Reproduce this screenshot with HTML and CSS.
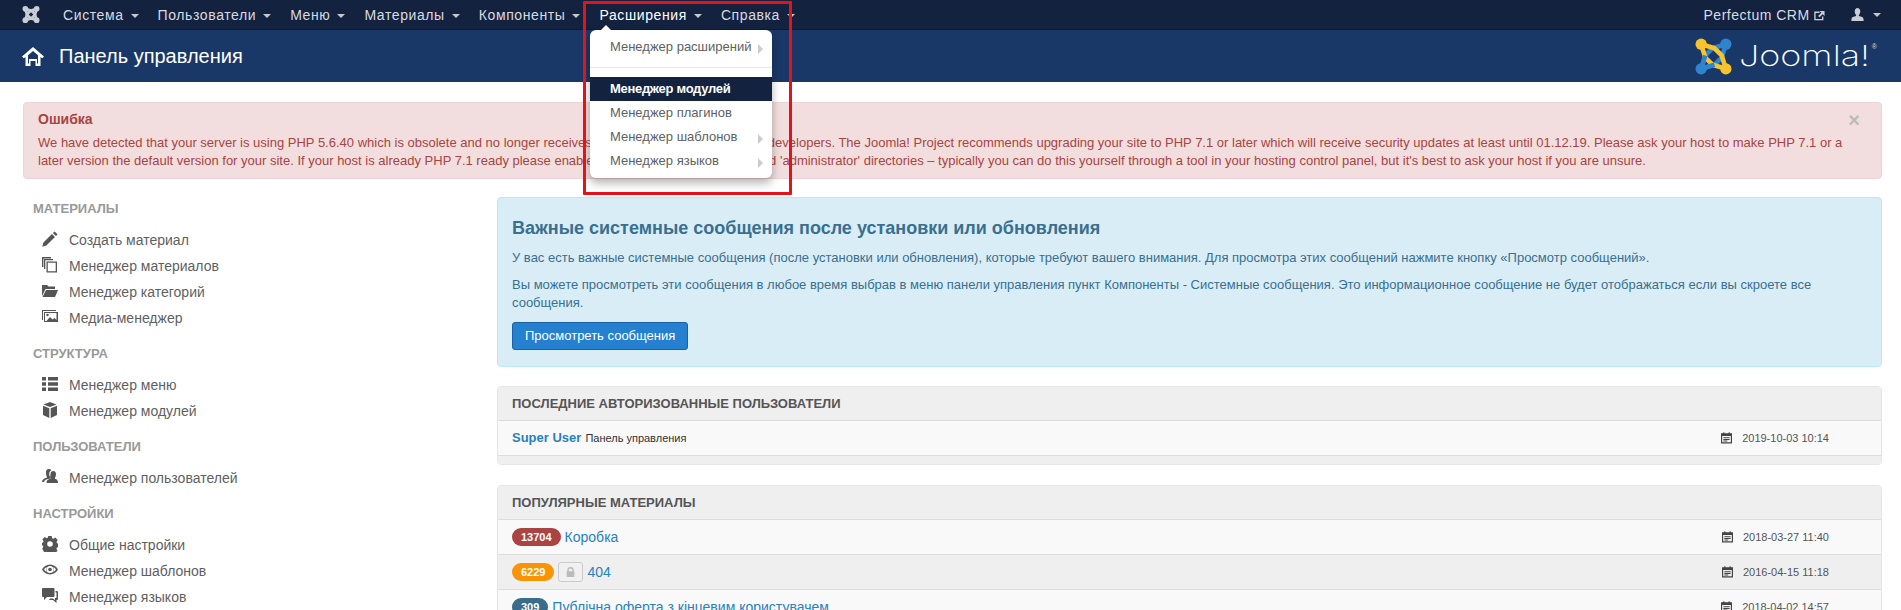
FILE: index.html
```html
<!DOCTYPE html>
<html>
  <head>
    <meta charset="UTF-8" />
    <title>Панель управления</title>
    <link rel="stylesheet" href="styles.css">
  </head>
  <body>
    <svg class="sprite" xmlns="http://www.w3.org/2000/svg">
      <symbol id="i-pencil" viewBox="0 0 16 16"><path d="M12.600 0.400l3 3-1.700 1.700-3-3zM10 3l3 3-8.600 8.600-4.200 1.200 1.200-4.200z"/></symbol>
      <symbol id="i-stack" viewBox="0 0 16 16"><path d="M0 0h9v1.400H1.400V10H0zM2 2h9v1.300H3.300V12H2z"/><path d="M4.500 4.500h10.500v11H4.500zM5.800 5.800v8.400h7.900V5.800z" fill-rule="evenodd"/></symbol>
      <symbol id="i-folder" viewBox="0 0 16 16"><path d="M0 2h5l1.500 1.500H13V6H3.500L0 13zM4 7h12l-3 7H0.500z"/></symbol>
      <symbol id="i-image" viewBox="0 0 16 16"><path d="M0 1h14v1H1v9H0z"/><path fill-rule="evenodd" d="M2 3h14v10H2zM3 4v8h1.500l3.500-4 2.500 2.500 2-1.500 2 2V4z"/><circle cx="5.500" cy="6" r="1.200"/></symbol>
      <symbol id="i-list" viewBox="0 0 16 16"><path d="M0 1h4v3.500H0zM6 1h10v3.500H6zM0 6.300h4v3.500H0zM6 6.300h10v3.500H6zM0 11.500h4V15H0zM6 11.500h10V15H6z"/></symbol>
      <symbol id="i-cube" viewBox="0 0 16 16"><path d="M8 0l6.500 2.500L8 5 1.500 2.500zM1 3.800l6.300 2.400V16L1 13zM15 3.800L8.700 6.200V16l6.300-3z"/></symbol>
      <symbol id="i-users" viewBox="0 0 16 16"><path d="M4 3c0-2 1.200-3 2.800-3 1.100 0 2 .5 2.500 1.300C7.800 2 7.200 3.400 7.200 5c0 1.500.6 2.700 1.300 3.400v1.200C5 10 2.500 11 2 13H0c0-2.500 2-3.800 4.800-4.300V7.500C4.200 6.800 4 5 4 3z"/><path d="M8.500 5c0-2 1.200-3 2.700-3s2.800 1 2.800 3c0 1.500-.4 3-1 3.700v1.100c1.800.4 3 1.500 3 4.200H4.500c0-2.700 1.500-3.800 4-4.200V8.700C7.900 8 8.500 6.500 8.500 5z"/></symbol>
      <symbol id="i-cog" viewBox="0 0 16 16"><path fill-rule="evenodd" d="M6.300 0h3.400l.4 2.200 1.300.6 2-1.200 2.300 2.400-1.200 1.900.6 1.400 1.900.4v3.400l-2 .4-.6 1.300 1.200 1.900-2.400 2.300-1.900-1.200-1.300.5-.5 2.100H6.300l-.5-2.100-1.300-.5-1.900 1.200L.2 12.700l1.200-1.900-.6-1.300-.8-.2V6.900l1-.3.6-1.400-1.200-1.900L2.700 1l2 1.200 1.200-.6zM8 5.200a2.800 2.800 0 1 0 0 5.600 2.800 2.800 0 0 0 0-5.600z"/></symbol>
      <symbol id="i-eye" viewBox="0 0 16 16"><path fill-rule="evenodd" d="M8 2.500c3.600 0 6.500 2.200 8 5-1.500 2.800-4.400 5-8 5s-6.500-2.200-8-5c1.500-2.800 4.400-5 8-5zM8 4a3.500 3.500 0 1 0 0 7 3.500 3.500 0 0 0 0-7zM2 7.500c.7 1.100 1.600 2 2.700 2.600-.7-1.800-.7-3.500 0-5.200C3.600 5.500 2.700 6.400 2 7.500zm9.300-2.600c.7 1.700.7 3.400 0 5.200 1.100-.6 2-1.500 2.700-2.600-.7-1.100-1.600-2-2.700-2.600z"/><circle cx="8" cy="7.500" r="1.800"/></symbol>
      <symbol id="i-comments" viewBox="0 0 16 16"><path d="M1 0h10.500a1 1 0 0 1 1 1v7a1 1 0 0 1-1 1H5l-3 3V9H1a1 1 0 0 1-1-1V1a1 1 0 0 1 1-1z"/><path d="M13.500 3H15a1 1 0 0 1 1 1v7a1 1 0 0 1-1 1h-.5v3L11 12H7l1-1.500h3l2 1.500V10h1.500V4.500h-1z"/></symbol>
      <symbol id="i-calendar" viewBox="0 0 14 14"><path fill-rule="evenodd" d="M0 1h2.500V0h2v1h5V0h2v1H14v13H0zM1.500 4.500V12.500h11V4.500z"/><path d="M3 6h8v1.200H3zM3 8.200h8v1.200H3zM3 10.300h5v1.200H3z"/></symbol>
      <symbol id="i-lock" viewBox="0 0 12 14"><path fill-rule="evenodd" d="M1.500 6V4.500a4.500 4.500 0 0 1 9 0V6h1v8H.5V6zM3.500 6h5V4.500a2.500 2.500 0 0 0-5 0z"/></symbol>
    </svg>

    <nav class="topbar">
      <svg class="topbar-logo" viewBox="0 0 36 36">
        <g fill="none" stroke="#c8cdd6" stroke-width="6">
          <path d="M6 6L10 19 17 26 30 30 26 17 19 10z"/>
          <path d="M30 6L17 10 10 17 6 30 19 26 26 19z"/>
        </g>
        <g fill="#c8cdd6">
          <circle cx="6" cy="6" r="6"/><circle cx="30" cy="6" r="6"/>
          <circle cx="6" cy="30" r="6"/><circle cx="30" cy="30" r="6"/>
        </g>
      </svg>
      <ul class="menu">
        <li><a href="#">Система<b class="caret"></b></a></li>
        <li><a href="#">Пользователи<b class="caret"></b></a></li>
        <li><a href="#">Меню<b class="caret"></b></a></li>
        <li><a href="#">Материалы<b class="caret"></b></a></li>
        <li><a href="#">Компоненты<b class="caret"></b></a></li>
        <li class="open">
          <a href="#">Расширения<b class="caret"></b></a>
          <div class="dropdown">
            <a href="#" class="sub tall">Менеджер расширений</a>
            <div class="divider"></div>
            <a href="#" class="active">Менеджер модулей</a>
            <a href="#">Менеджер плагинов</a>
            <a href="#" class="sub">Менеджер шаблонов</a>
            <a href="#" class="sub">Менеджер языков</a>
          </div>
        </li>
        <li><a href="#">Справка<b class="caret"></b></a></li>
      </ul>
      <div class="topbar-right">
        <a href="#" class="site-link">Perfectum CRM
          <svg class="ext-icon" viewBox="0 0 12 12"><path fill="none" stroke="#c8cdd6" stroke-width="1.500" d="M9.500 7v3.500h-8.500v-8h5"/><path fill="#c8cdd6" d="M6 1h5.500v5.500L9.500 4.500 6 8 4.500 6.500 8 3z"/></svg>
        </a>
        <a href="#" class="user-link">
          <svg class="user-icon" viewBox="0 0 14 14"><path fill="#c8cdd6" d="M4 3.500C4 1.500 5.300 0 7 0s3 1.500 3 3.500c0 1.600-.6 3.300-1.500 4v1.200c2.500.5 5 1.300 5 3.300v2h-13v-2c0-2 2.500-2.800 5-3.300V7.500C4.600 6.800 4 5.100 4 3.500z"/></svg>
          <b class="caret"></b>
        </a>
      </div>
    </nav>

    <header class="subhead">
      <svg class="home-icon" viewBox="0 0 22 19"><path fill="#fff" fill-rule="evenodd" d="M11 0l11 9.500-1.800 1.800-1.700-1.400V19H13.500v-5h-5v5H3.500V9.900l-1.700 1.400L0 9.500zM11 4L6 8.300V16.500h1V12h8v4.500h1V8.300z"/></svg>
      <h1>Панель управления</h1>
      <div class="brand">
        <svg class="brand-mark" viewBox="0 0 36 36">
          <g fill="none" stroke-width="4.500" stroke-linejoin="round">
            <path stroke="#2f84cc" d="M30 6L17 10 10 17 6 30 19 26 26 19z"/>
            <path stroke="#f7c52b" d="M6 6L10 19 17 26 30 30 26 17 19 10z"/>
            <path stroke="#2f84cc" d="M10 17L6 30 19 26"/>
          </g>
          <circle cx="6" cy="6" r="5.500" fill="#f7c52b"/>
          <circle cx="30" cy="6" r="5.500" fill="#2f84cc"/>
          <circle cx="6" cy="30" r="5.500" fill="#2f84cc"/>
          <circle cx="30" cy="30" r="5.500" fill="#f7c52b"/>
        </svg>
        <span class="brand-name">Joomla!</span>
        <sup class="brand-reg">®</sup>
      </div>
    </header>

    <main class="page">
      <div class="alert">
        <span class="alert-close">×</span>
        <h4>Ошибка</h4>
        <p>We have detected that your server is using PHP 5.6.40 which is obsolete and no longer receives official security updates by its developers. The Joomla! Project recommends upgrading your site to PHP 7.1 or later which will receive security updates at least until 01.12.19. Please ask your host to make PHP 7.1 or a later version the default version for your site. If your host is already PHP 7.1 ready please enable PHP 7.1 on your site's root and 'administrator' directories – typically you can do this yourself through a tool in your hosting control panel, but it's best to ask your host if you are unsure.</p>
      </div>

      <div class="columns">
        <aside class="sidebar">
          <h5>Материалы</h5>
          <ul>
            <li><svg class="icon"><use href="#i-pencil"/></svg>Создать материал</li>
            <li><svg class="icon"><use href="#i-stack"/></svg>Менеджер материалов</li>
            <li><svg class="icon"><use href="#i-folder"/></svg>Менеджер категорий</li>
            <li><svg class="icon"><use href="#i-image"/></svg>Медиа-менеджер</li>
          </ul>
          <h5>Структура</h5>
          <ul>
            <li><svg class="icon"><use href="#i-list"/></svg>Менеджер меню</li>
            <li><svg class="icon"><use href="#i-cube"/></svg>Менеджер модулей</li>
          </ul>
          <h5>Пользователи</h5>
          <ul>
            <li><svg class="icon"><use href="#i-users"/></svg>Менеджер пользователей</li>
          </ul>
          <h5>Настройки</h5>
          <ul>
            <li><svg class="icon"><use href="#i-cog"/></svg>Общие настройки</li>
            <li><svg class="icon"><use href="#i-eye"/></svg>Менеджер шаблонов</li>
            <li><svg class="icon"><use href="#i-comments"/></svg>Менеджер языков</li>
          </ul>
        </aside>

        <section class="content">
          <div class="notice">
            <h2>Важные системные сообщения после установки или обновления</h2>
            <p>У вас есть важные системные сообщения (после установки или обновления), которые требуют вашего внимания. Для просмотра этих сообщений нажмите кнопку «Просмотр сообщений».</p>
            <p>Вы можете просмотреть эти сообщения в любое время выбрав в меню панели управления пункт Компоненты - Системные сообщения. Это информационное сообщение не будет отображаться если вы скроете все сообщения.</p>
            <a href="#" class="btn">Просмотреть сообщения</a>
          </div>

          <div class="panel">
            <h3>Последние авторизованные пользователи</h3>
            <div class="row">
              <div class="row-title"><a href="#" class="user-name">Super User</a> <small>Панель управления</small></div>
              <div class="row-date"><svg class="date-icon"><use href="#i-calendar"/></svg>2019-10-03 10:14</div>
            </div>
            <div class="panel-foot"></div>
          </div>

          <div class="panel">
            <h3>Популярные материалы</h3>
            <div class="row">
              <div class="row-title"><span class="badge badge-red">13704</span><a href="#">Коробка</a></div>
              <div class="row-date"><svg class="date-icon"><use href="#i-calendar"/></svg>2018-03-27 11:40</div>
            </div>
            <div class="row alt">
              <div class="row-title"><span class="badge badge-orange">6229</span><span class="lock-btn"><svg viewBox="0 0 12 14"><use href="#i-lock"/></svg></span><a href="#">404</a></div>
              <div class="row-date"><svg class="date-icon"><use href="#i-calendar"/></svg>2016-04-15 11:18</div>
            </div>
            <div class="row">
              <div class="row-title"><span class="badge badge-blue">309</span><a href="#">Публічна оферта з кінцевим користувачем</a></div>
              <div class="row-date"><svg class="date-icon"><use href="#i-calendar"/></svg>2018-04-02 14:57</div>
            </div>
          </div>
        </section>
      </div>
    </main>

    <div class="red-frame"></div>
  </body>
</html>
```

FILE: styles.css
```css
* {
  margin: 0;
  padding: 0;
  box-sizing: border-box;
}
html, body {
  height: 100%;
  overflow: hidden;
}
body {
  position: relative;
  background: #fff;
  color: #555;
  font-family: "Liberation Sans", Arial, sans-serif;
  font-size: 13px;
  line-height: 18px;
}
a {
  color: #2a80bd;
  text-decoration: none;
}
ul {
  list-style: none;
}
.sprite {
  display: none;
}

/* top bar */
.topbar {
  height: 30px;
  display: flex;
  align-items: center;
  padding: 0 20px 0 22px;
  background: #13223f;
  border-bottom: 1px solid #0f1a30;
}
.topbar-logo {
  width: 18px;
  height: 17px;
  margin-right: 13.500px;
}
.menu {
  display: flex;
  height: 29px;
}
.menu > li {
  position: relative;
  padding: 0 9.500px;
  display: flex;
  align-items: center;
}
.menu > li > a {
  color: #d8dbe0;
  font-size: 14px;
  letter-spacing: .6px;
}
.menu > li.open > a {
  color: #fff;
}
.caret {
  display: inline-block;
  margin-left: 7px;
  vertical-align: middle;
  border-top: 4px solid #d8dbe0;
  border-left: 4px solid transparent;
  border-right: 4px solid transparent;
  opacity: .9;
}
.dropdown {
  position: absolute;
  z-index: 5;
  top: 30px;
  left: 0;
  width: 182px;
  height: 148px;
  padding-top: 5px;
  background: #fff;
  border-radius: 6px;
  box-shadow: 0 5px 10px rgba(0, 0, 0, .3);
}
.dropdown:before {
  position: absolute;
  top: -5px;
  left: 10px;
  content: '';
  border-left: 6px solid transparent;
  border-right: 6px solid transparent;
  border-bottom: 6px solid #fff;
}
.dropdown a {
  display: block;
  position: relative;
  height: 24px;
  padding-left: 20px;
  color: #5f5f5f;
  font-size: 13px;
  line-height: 24px;
}
.dropdown a.tall {
  height: 26px;
}
.dropdown a.sub:after {
  position: absolute;
  top: 9px;
  right: 9px;
  content: '';
  border-top: 5px solid transparent;
  border-bottom: 5px solid transparent;
  border-left: 5px solid #ccc;
}
.dropdown a.active {
  background: #13223f;
  color: #fff;
  font-weight: bold;
  letter-spacing: -.3px;
}
.divider {
  height: 1px;
  margin: 6px 0 9px;
  background: #e8e8e8;
}
.topbar-right {
  margin-left: auto;
  display: flex;
  align-items: center;
}
.site-link {
  color: #d8dbe0;
  font-size: 14px;
  letter-spacing: .5px;
}
.ext-icon {
  width: 11px;
  height: 11px;
  vertical-align: -1px;
}
.user-link {
  display: flex;
  align-items: center;
  margin-left: 26px;
}
.user-icon {
  width: 13px;
  height: 13px;
}
.user-link .caret {
  margin-left: 9px;
}

/* blue header */
.subhead {
  height: 52px;
  display: flex;
  align-items: center;
  padding: 0 24px 0 22px;
  background: #1a3867;
}
.home-icon {
  width: 22px;
  height: 19px;
  margin-right: 15px;
}
.subhead h1 {
  color: #fff;
  font-size: 20px;
  font-weight: normal;
}
.brand {
  margin-left: auto;
  display: flex;
  align-items: center;
}
.brand-mark {
  width: 37px;
  height: 37px;
  margin-right: 7px;
}
.brand-name {
  display: block;
  width: 133px;
  color: #fff;
  font-family: Inter, "Liberation Sans", sans-serif;
  font-weight: 200;
  font-size: 29px;
  line-height: 36px;
  white-space: nowrap;
  transform: scaleX(1.240);
  transform-origin: left center;
}
.brand-reg {
  align-self: flex-start;
  margin-top: 4px;
  color: #ddd;
  font-size: 7px;
  line-height: 10px;
}

/* main */
.page {
  padding: 20px 19px 0 23px;
}
.alert {
  position: relative;
  height: 77px;
  padding: 7px 35px 8px 14px;
  background: #f2dede;
  border: 1px solid #eed3d7;
  border-radius: 4px;
  color: #a94442;
}
.alert h4 {
  font-size: 14px;
  line-height: 18px;
  margin-bottom: 6px;
}
.alert-close {
  position: absolute;
  top: 7px;
  right: 21px;
  color: #bbb;
  font-size: 20px;
  font-weight: bold;
  line-height: 20px;
}
.columns {
  display: grid;
  grid-template-columns: 474px 1fr;
  margin-top: 18px;
}
.sidebar {
  padding: 3px 0 0 10px;
}
.sidebar h5 {
  color: #999;
  font-size: 13px;
  line-height: 18px;
  text-transform: uppercase;
}
.sidebar ul {
  padding: 9px 0 14px 9px;
}
.sidebar li {
  display: flex;
  align-items: center;
  height: 26px;
  color: #5f5f5f;
  font-size: 14px;
}
.icon {
  width: 16px;
  height: 16px;
  margin: -2px 11px 0 0;
  fill: #555;
  flex: none;
}
.notice {
  height: 170px;
  padding: 20px 14px;
  background: #d9edf7;
  border: 1px solid #bce8f1;
  border-radius: 4px;
  color: #3a6f8f;
}
.notice h2 {
  font-size: 18px;
  line-height: 20px;
  margin-bottom: 11px;
}
.notice p {
  line-height: 18.500px;
  margin-bottom: 8px;
}
.btn {
  display: inline-block;
  height: 28px;
  padding: 0 12px;
  background: #2580d0;
  border: 1px solid #1a5fa8;
  border-radius: 3px;
  color: #fff;
  line-height: 26px;
  margin-top: 1px;
}
.panel {
  margin-top: 20px;
  background: #f9f9f9;
  border: 1px solid #e6e6e6;
  border-radius: 4px;
}
.notice + .panel {
  margin-top: 19px;
}
.panel h3 {
  height: 34px;
  padding: 0 14px;
  background: #efefef;
  border-bottom: 1px solid #ddd;
  color: #555;
  font-size: 13px;
  font-weight: bold;
  line-height: 33px;
  text-transform: uppercase;
}
.row {
  height: 35px;
  display: flex;
  align-items: center;
  justify-content: space-between;
  padding: 0 52px 0 14px;
  border-bottom: 1px solid #ddd;
}
.row.alt {
  background: #efefef;
}
.row-title {
  display: flex;
  align-items: center;
  gap: 4px;
}
.row-title a {
  font-size: 14px;
}
.row-title a.user-name {
  font-size: 13px;
  font-weight: bold;
}
.row-title small {
  color: #333;
  font-size: 11px;
}
.row-date {
  display: flex;
  align-items: center;
  color: #555;
  font-size: 11px;
}
.date-icon {
  width: 11px;
  height: 12px;
  margin-right: 10px;
  fill: #444;
}
.panel-foot {
  height: 8px;
  background: #efefef;
}
.badge {
  height: 18px;
  padding: 0 9px;
  border-radius: 9px;
  color: #fff;
  font-size: 11px;
  font-weight: bold;
  line-height: 18px;
}
.badge-red {
  background: #a94442;
}
.badge-orange {
  background: #f89406;
}
.badge-blue {
  background: #3a6d8c;
}
.lock-btn {
  display: flex;
  align-items: center;
  justify-content: center;
  width: 25px;
  height: 20px;
  background: #f0f0f0;
  border: 1px solid #ccc;
  border-radius: 3px;
}
.lock-btn svg {
  width: 9px;
  height: 10px;
  fill: #bbb;
}

/* red marker drawn over the screenshot */
.red-frame {
  position: absolute;
  z-index: 9;
  left: 583px;
  top: 1px;
  width: 209px;
  height: 194px;
  border: 3px solid #e8111b;
  border-radius: 1px;
}
```
